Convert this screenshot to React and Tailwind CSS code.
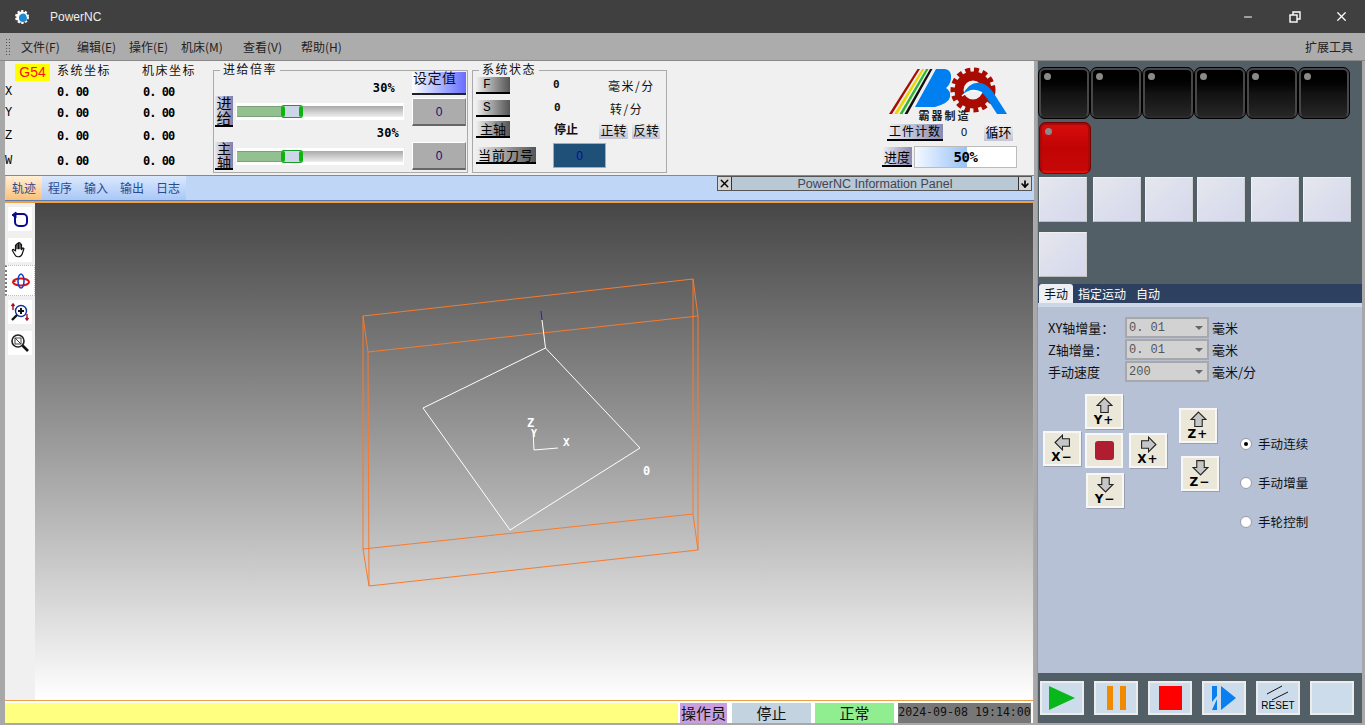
import { ArrowDown, Minus, X } from 'lucide-react'

const cjk = "font-['Noto_Sans_CJK_SC','Liberation_Sans',sans-serif]"
const mono = "font-['DejaVu_Sans_Mono','Liberation_Mono',monospace]"
const serifMono = "font-['Liberation_Mono',monospace]"

const menus = [
  ['文件(F)', 'w-[56px]'],
  ['编辑(E)', 'w-[52px]'],
  ['操作(E)', 'w-[52px]'],
  ['机床(M)', 'w-[62px]'],
  ['查看(V)', 'w-[58px]'],
  ['帮助(H)', 'w-[60px]'],
]

const coords = [
  ['X', 'h-[21px]'],
  ['Y', 'h-[22px]'],
  ['Z', 'h-[24px]'],
  ['W', 'h-[26px]'],
]

function AppGear() {
  return (
    <svg width="16" height="16" viewBox="0 0 16 16">
      <circle cx="8" cy="8" r="5.5" fill="#fff" stroke="#fff" strokeWidth="3" strokeDasharray="2 1.5" />
      <circle cx="8" cy="8" r="5.5" fill="#fff" />
      <path d="M5 9a4 4 0 0 1 7-3l1 3a4 4 0 0 1-8 0z" fill="#1e88d0" />
    </svg>
  )
}

function FadeLabel({ children, className }) {
  return (
    <div className={`flex items-center justify-center bg-gradient-to-r from-[#f0f0f0] to-[#555] border-b-2 border-black text-[13px] leading-none text-black ${className}`}>
      {children}
    </div>
  )
}

function Slider() {
  return (
    <div className="w-[168px] h-[17px] bg-white p-[1px] py-[3px] flex items-center">
      <div className="relative w-full h-[11px] bg-gradient-to-b from-[#aaa] via-[#ccc] to-[#eee]">
        <div className="absolute left-0 top-0 h-full w-[45px] bg-[#92c08e] border-y border-[#7aa276]" />
        <div className="absolute left-[44px] top-[-1px] h-[13px] w-[22px] bg-[#ccd6e6] border-y border-[#1a9a2a] rounded-[3px] flex justify-between">
          <span className="w-[4px] bg-[#0db40d] rounded-[2px]" />
          <span className="w-[4px] bg-[#0db40d] rounded-[2px]" />
        </div>
      </div>
    </div>
  )
}

function ValueBox({ className }) {
  return (
    <div className={`w-[54px] h-[28px] bg-[#acacac] border-t border-l border-white border-b-2 border-r border-b-[#666] border-r-[#888] flex items-center justify-center text-[12px] text-[#10107a] font-['Liberation_Sans',sans-serif] ${className}`}>
      0
    </div>
  )
}

function DarkKey({ red }) {
  return (
    <div className={`relative w-[52px] h-[52px] shrink-0 rounded-[7px] border-[3px] ${red ? 'border-[#a80a0a] border-b-[#e01010] outline outline-1 -outline-offset-1 outline-[#700] bg-gradient-to-b from-[#d80c0c] via-[#c00404] to-[#c80808]' : 'border-[#474747] border-b-[#2c2c2c] outline outline-1 -outline-offset-1 outline-black bg-gradient-to-b from-[#000] via-[#121212] to-[#262626]'}`}>
      <span className="absolute left-[3px] top-[3px] w-[7px] h-[7px] rounded-full bg-[#8a8a8a]" />
    </div>
  )
}

function LightKey({ className }) {
  return <div className={`w-[48px] h-[45px] shrink-0 bg-gradient-to-br from-[#e6e7ee] via-[#dcdfec] to-[#d6d8ec] border border-[#f0f0f0] border-b-[#bcbcbc] border-r-[#d0d0d0] ${className ?? ''}`} />
}

function Arrow({ dir }) {
  const rot = { up: 0, right: 90, down: 180, left: 270 }[dir]
  return (
    <svg width="17" height="17" viewBox="0 0 16 16" style={{ transform: `rotate(${rot}deg)` }}>
      <path d="M8 1 15 8h-3.500v6.500h-7V8H1z" fill="#c6c6c6" stroke="#222" strokeWidth="1" />
    </svg>
  )
}

function JogKey({ dir, label, className }) {
  return (
    <div className={`w-[38px] h-[35px] bg-[#ebe8da] border-2 border-[#f7f7f7] shadow-[1px_1px_0_#9aa0ad] flex flex-col items-center justify-center ${className}`}>
      <Arrow dir={dir} />
      <span className="text-[12px] leading-[12px] font-bold tracking-[1px] text-black font-['DejaVu_Sans',sans-serif]">{label}</span>
    </div>
  )
}

function ComboRow({ label, value, unit }) {
  return (
    <div className="flex items-center h-[21px] mb-[1px]">
      <span className={`w-[77px] text-[13px] leading-none text-[#111] ${cjk}`}>{label}</span>
      <div className="w-[84px] h-[21px] bg-[#d2d2d2] border-2 border-[#a8a8a8] flex items-center justify-between pl-[2px] pr-[4px]">
        <span className={`text-[12px] text-[#555] ${serifMono}`}>{value}</span>
        <span className="w-0 h-0 border-x-[4px] border-x-transparent border-t-[4px] border-t-[#666]" />
      </div>
      <span className={`ml-[3px] text-[13px] text-[#111] ${cjk}`}>{unit}</span>
    </div>
  )
}

function Radio({ label, checked }) {
  return (
    <div className="flex items-center h-[20px] mb-[19px]">
      <span className="w-[12px] h-[12px] rounded-full bg-white border border-[#9a9aa8] flex items-center justify-center">
        {checked && <span className="w-[4px] h-[4px] rounded-full bg-black" />}
      </span>
      <span className={`ml-[6px] text-[12.500px] tracking-[0.1px] text-[#111] ${cjk}`}>{label}</span>
    </div>
  )
}

function RunKey({ children, className }) {
  return (
    <div className={`w-[44px] h-[34px] bg-[#cddcea] border-2 border-[#ececec] flex items-center justify-center ${className ?? ''}`}>
      {children}
    </div>
  )
}

function Logo() {
  return (
    <svg width="122" height="50" viewBox="890 66 122 50">
      <polygon points="919.500,69 922,69 894,114 891,114" fill="#a80c00" />
      <polygon points="924,69 926.500,69 899.500,114 896,114" fill="#e6d800" />
      <polygon points="928,69 930.500,69 904.500,114 901.500,114" fill="#2fb52f" />
      <polygon points="932,69 934.500,69 909.500,114 906.500,114" fill="#111" />
      <path d="M938 69h9q7 1 6 10-1 6-5 9 5 3 4 9-1 6-15 10h-20z" fill="#0080f0" />
      <circle cx="975" cy="90" r="14" fill="none" stroke="#a80c00" strokeWidth="9" />
      <circle cx="975" cy="90" r="20" fill="none" stroke="#a80c00" strokeWidth="5" strokeDasharray="5 3.600" />
      <path d="M964 96q10-9 20-3 4 3 6 7l9 14h10l-14-22q-5-7-12-9-12-2-19 13z" fill="#0080f0" />
      <path d="M964 96q10-9 20-3" fill="none" stroke="#fff" strokeWidth="1.500" />
    </svg>
  )
}

function ToolIcon({ children, active }) {
  return (
    <div className={`w-[30px] h-[31px] flex items-center justify-center ${active ? 'bg-white border border-dotted border-[#bbb] border-l-[#777] border-l-2' : ''}`}>
      <div className="w-[24px] h-[24px] bg-white flex items-center justify-center">{children}</div>
    </div>
  )
}

function Scene() {
  // wireframe is drawn in page coordinates
  return (
    <svg className="absolute inset-0" width="998" height="497" viewBox="35 203 998 497">
      <g fill="none" stroke="#f97a2c" strokeWidth="1">
        <polygon points="363,316 693,279 698,316 368,352" />
        <polygon points="363,549 693,514 698,550 369,586" />
        <path d="M363 316V549M693 279V514M698 316V550M368 352 369 586" />
      </g>
      <g fill="none" stroke="#fff" strokeWidth="1">
        <polygon points="545.500,348 640,448 510,530 423,408" />
        <path d="M545.500 348 542 320" />
        <path d="M533 430 534 450 558 448" />
      </g>
      <path d="M542 320 541 311" stroke="#2222cc" strokeWidth="1" />
    </svg>
  )
}

export default function App() {
  return (
    <div className="w-[1365px] h-[725px] overflow-hidden bg-[#a8a8a8] flex flex-col font-['Noto_Sans_CJK_SC','Liberation_Sans',sans-serif]">
      {/* title bar */}
      <div className="h-[33px] shrink-0 bg-[#404040] flex items-center text-white">
        <div className="ml-[14px] w-[16px]"><AppGear /></div>
        <span className="ml-[20px] text-[12px] font-['Liberation_Sans',sans-serif] text-[#eee]">PowerNC</span>
        <div className="ml-auto flex items-center mr-[16px]">
          <Minus size={12} strokeWidth={2} />
          <svg className="ml-[35px]" width="12" height="12" viewBox="0 0 12 12" fill="none" stroke="#fff" strokeWidth="1.400">
            <rect x="1" y="4" width="7" height="7" />
            <path d="M4 4V1h7v7H8" />
          </svg>
          <X className="ml-[33px]" size={15} strokeWidth={2} />
        </div>
      </div>

      {/* menu bar */}
      <div className="h-[28px] shrink-0 flex items-center bg-[#acacac] pl-[5px] pr-[12px] border-b border-[#888] text-[12px] text-[#222]">
        <div className="w-[5px] h-[18px] bg-[radial-gradient(#555_1px,transparent_1px)] bg-[length:3px_3px]" />
        <div className="flex ml-[11px]">
          {menus.map(([m, w]) => <span key={m} className={w}>{m}</span>)}
        </div>
        <span className="ml-auto">扩展工具</span>
      </div>

      <div className="flex-1 flex pl-[5px] pr-[3px] min-h-0">
        {/* left column */}
        <div className="w-[1029px] shrink-0 flex flex-col">
          {/* top panel */}
          <div className="h-[115px] shrink-0 bg-[#f0f0f0] flex border-b border-[#888]">
            <div className="w-[208px] shrink-0">
              <div className="h-[20px] flex items-start text-[12px] leading-[18px] tracking-[1.500px] text-[#111]">
                <span className="ml-[10px] mt-[3px] w-[35px] h-[17px] bg-[#ffff00] text-[#ff1010] text-[14px] leading-[17px] text-center tracking-normal font-['Liberation_Sans',sans-serif]">G54</span>
                <span className="ml-[7px] w-[85px]">系统坐标</span>
                <span>机床坐标</span>
              </div>
              <div>
                {coords.map(([c, h]) => (
                  <div key={c} className={`flex items-center ${h} ${mono} text-[12px] tracking-[-1px] font-bold text-black`}>
                    <span className={`w-[52px] text-[12px] tracking-normal font-normal ${serifMono}`}>{c}</span>
                    <span className="w-[86px] whitespace-pre">0. 00</span>
                    <span className="whitespace-pre">0. 00</span>
                  </div>
                ))}
              </div>
            </div>

            {/* feed override group */}
            <div className="relative mt-[9px] mb-[2px] w-[255px] shrink-0 border border-[#aaa] flex">
              <span className="absolute left-[6px] top-[-9px] bg-[#f0f0f0] px-[3px] text-[12px] leading-[14px] tracking-[1.500px] text-[#111]">进给倍率</span>
              <div className="w-[198px] pl-[1px] shrink-0 relative">
                <div className="h-[25px] flex items-end justify-end pr-[17px] pb-[1px] text-[12px] font-bold leading-[14px] tracking-[0.2px] font-['DejaVu_Sans_Mono',monospace]">30%</div>
                <div className="flex items-center h-[30px]">
                  <FadeLabel className="w-[18px] h-[31px] text-center !from-[#e8e8f0] !to-[#8080a8] !text-[15px]">进给</FadeLabel>
                  <div className="ml-[3px]"><Slider /></div>
                </div>
                <div className="h-[16px] flex items-end justify-end pr-[13px] pb-[2px] text-[12px] font-bold leading-[14px] tracking-[0.2px] font-['DejaVu_Sans_Mono',monospace]">30%</div>
                <div className="flex items-center h-[28px]">
                  <FadeLabel className="w-[18px] h-[28px] text-center !from-[#e8e8f0] !to-[#8080a8] !text-[14px]">主轴</FadeLabel>
                  <div className="ml-[3px]"><Slider /></div>
                </div>
              </div>
              <div className="flex flex-col">
                <div className="w-[54px] h-[23px] mt-[1px] bg-gradient-to-r from-white to-[#6a6aff] border-b-2 border-[#222] text-[14px] leading-[10px] tracking-[0.500px] text-[#111] pl-[1px]">设定值</div>
                <ValueBox className="mt-[3px]" />
                <ValueBox className="mt-[16px]" />
              </div>
            </div>

            {/* system status group */}
            <div className="relative ml-[4px] mt-[9px] mb-[2px] w-[195px] shrink-0 border border-[#aaa] pl-[3px] text-[#111]">
              <span className="absolute left-[6px] top-[-9px] bg-[#f0f0f0] px-[3px] text-[12px] leading-[14px] tracking-[1.500px]">系统状态</span>
              <div className="flex items-center mt-[6px] h-[17px]">
                <FadeLabel className={`w-[34px] h-[17px] !justify-start pl-[7px] ${serifMono}`}>F</FadeLabel>
                <span className="ml-[43px] w-[20px] text-[11px] font-bold font-['DejaVu_Sans_Mono',monospace]">0</span>
                <span className="ml-[35px] text-[12px] tracking-[1.500px]">毫米/分</span>
              </div>
              <div className="flex items-center mt-[6px] h-[17px]">
                <FadeLabel className={`w-[34px] h-[17px] !justify-start pl-[7px] ${serifMono}`}>S</FadeLabel>
                <span className="ml-[44px] w-[20px] text-[11px] font-bold font-['DejaVu_Sans_Mono',monospace]">0</span>
                <span className="ml-[36px] text-[12px] tracking-[1.500px]">转/分</span>
              </div>
              <div className="flex items-center mt-[3px] h-[18px]">
                <FadeLabel className="w-[34px] h-[17px]">主轴</FadeLabel>
                <span className="ml-[44px] w-[45px] text-[12px] font-bold">停止</span>
                <span className="mt-[2px] w-[29px] h-[18px] bg-gradient-to-b from-[#f4f4f4] to-[#c4c4d4] text-[13px] leading-[17px] text-center">正转</span>
                <span className="mt-[2px] ml-[4px] w-[28px] h-[18px] bg-gradient-to-b from-[#f4f4f4] to-[#c4c4d4] text-[13px] leading-[17px] text-center">反转</span>
              </div>
              <div className="flex items-center mt-[4px]">
                <FadeLabel className="w-[60px] h-[17px] tracking-[1px]">当前刀号</FadeLabel>
                <div className="ml-[17px] mt-[1px] w-[53px] h-[25px] bg-[#1e5078] border border-[#aaa] flex items-center justify-center text-[12px] text-[#0a0aa0] font-['Liberation_Sans',sans-serif]">0</div>
              </div>
            </div>

            {/* logo and counters */}
            <div className="ml-[217px] flex flex-col pt-[5px] w-[135px] shrink-0">
              <div className="ml-[4px]"><Logo /></div>
              <div className="text-center -mt-[6px] ml-[-14px] text-[11px] leading-[11px] font-bold tracking-[2px] text-[#222]">霸器制造</div>
              <div className="flex items-center mt-[2px] ml-[3px] h-[18px]">
                <FadeLabel className="w-[56px] h-[17px] !from-[#f0f0f4] !to-[#8a8ab0] tracking-[1px] !text-[12px]">工件计数</FadeLabel>
                <span className="ml-[18px] w-[23px] text-[11px] font-['Liberation_Sans',sans-serif]">0</span>
                <span className="w-[29px] h-[18px] bg-gradient-to-b from-[#f4f4f4] to-[#c4c4d4] text-[13px] leading-[17px] text-center">循环</span>
              </div>
              <div className="flex items-center mt-[5px] -ml-[2px]">
                <FadeLabel className="w-[30px] h-[20px] !from-[#f0f0f4] !to-[#8a8ab0] !text-[13px]">进度</FadeLabel>
                <div className="relative ml-[2px] w-[103px] h-[22px] border border-[#bbb] bg-white">
                  <div className="w-[52px] h-full bg-gradient-to-r from-[#f4f8ff] to-[#98c2f6]" />
                  <span className="absolute inset-0 flex items-center justify-center text-[14px] font-bold font-['DejaVu_Sans_Mono',monospace] tracking-[-0.5px]">50%</span>
                </div>
              </div>
            </div>
          </div>

          {/* tab strip */}
          <div className="h-[25px] shrink-0 bg-[#c0d6f7] border-b border-[#5a7ab0] flex pl-[1px] text-[12px]">
            <div className="h-[24px] w-[36px] bg-gradient-to-b from-[#fff0d8] to-[#f9bf78] text-center leading-[24px] text-[#2a4a90]">轨迹</div>
            <div className="flex h-[24px] bg-gradient-to-b from-[#dbe8fb] to-[#a8c8f8] text-[#2a4a90]">
              {['程序', '输入', '输出', '日志'].map(t => <span key={t} className="w-[36px] text-center leading-[24px]">{t}</span>)}
            </div>
            <div className="ml-[531px] h-[15px] w-[315px] flex border border-[#555] bg-[#b8c8d4] text-[#445] text-[12.500px] leading-[14px] font-['Liberation_Sans',sans-serif]">
              <div className="w-[14px] bg-[#d4d4d4] border-r border-[#333] flex items-center justify-center"><X size={13} strokeWidth={2.500} color="#000" /></div>
              <div className="flex-1 text-center">PowerNC Information Panel</div>
              <div className="w-[13px] bg-[#d4d4d4] border-l border-[#333] flex items-center justify-center"><ArrowDown size={10} strokeWidth={4} color="#000" /></div>
            </div>
          </div>

          {/* viewport */}
          <div className="h-[499px] shrink-0 flex border-r border-t-2 border-[#f0a040] bg-white">
            <div className="w-[30px] shrink-0 bg-[#f0f0f0] flex flex-col items-center">
              <ToolIcon>
                <svg width="18" height="18" viewBox="0 0 18 18" fill="none" stroke="#0a0a90" strokeWidth="2"><path d="M5 4h7a4 4 0 0 1 4 4v4a4 4 0 0 1-4 4H8a4 4 0 0 1-4-4V6" /><path d="M1 5l4-3v6z" fill="#0a0a90" strokeWidth="1" /></svg>
              </ToolIcon>
              <ToolIcon>
                <svg width="18" height="18" viewBox="0 0 24 24" fill="#fff" stroke="#111" strokeWidth="1.600"><path d="M6 13V6a1 1 0 0 1 2 0v5V4a1 1 0 0 1 2 0v7V3a1 1 0 0 1 2 0v8V5a1 1 0 0 1 2 0v7l1-2a1 1 0 0 1 2 1l-2 6c-1 3-3 4-5 4H9c-2 0-3-1-4-3l-3-5a1 1 0 0 1 2-1z" /></svg>
              </ToolIcon>
              <ToolIcon active>
                <svg width="20" height="20" viewBox="0 0 20 20" fill="none"><ellipse cx="10" cy="11" rx="8" ry="3.500" stroke="#e01010" strokeWidth="2" /><ellipse cx="10" cy="10" rx="3" ry="7" stroke="#1040d0" strokeWidth="1.500" /><path d="M3 8l-1 3 3 0z" fill="#e01010" /></svg>
              </ToolIcon>
              <ToolIcon>
                <svg width="20" height="20" viewBox="0 0 20 20" fill="none"><circle cx="11" cy="9" r="5.500" stroke="#1030a0" strokeWidth="1.400" /><path d="M8 9h6M11 6v6" stroke="#111" strokeWidth="2" /><path d="M7 13 2 18" stroke="#111" strokeWidth="2.400" /><path d="M3 2v6M1.500 4 3 2l1.500 2M17 12v6M15.500 16l1.500 2 1.500-2" stroke="#a01020" strokeWidth="1.400" /></svg>
              </ToolIcon>
              <ToolIcon>
                <svg width="20" height="20" viewBox="0 0 20 20" fill="none"><circle cx="8" cy="8" r="6" stroke="#222" strokeWidth="1.600" /><rect x="5" y="5" width="6" height="6" stroke="#444" /><path d="M5 5l6 6" stroke="#444" /><path d="M12.500 12.500 18 18" stroke="#111" strokeWidth="2.600" /></svg>
              </ToolIcon>
            </div>
            <div className="relative flex-1 bg-gradient-to-b from-[#474747] to-white overflow-hidden">
              <Scene />
              <span className={`absolute left-[492px] top-[214px] text-[12px] leading-none font-bold text-white ${mono}`}>Z</span>
              <span className={`absolute left-[496px] top-[226px] text-[10px] leading-none font-bold text-white ${mono}`}>Y</span>
              <span className={`absolute left-[528px] top-[234px] text-[11px] leading-none font-bold text-white ${mono}`}>X</span>
              <span className={`absolute left-[608px] top-[262px] text-[12px] leading-none font-bold text-white ${mono}`}>0</span>
            </div>
          </div>

          {/* status bar */}
          <div className="h-[23px] shrink-0 pt-[2px] flex bg-white border-r border-t border-[#f0a040] text-[15px] text-[#111] leading-[19px]">
            <div className="w-[673px] bg-[#ffff80]" />
            <div className="ml-[2px] w-[47px] bg-[#c8a0e0] text-center whitespace-nowrap">操作员</div>
            <div className="ml-[5px] w-[79px] bg-[#c3d3e0] text-center">停止</div>
            <div className="ml-[4px] w-[79px] bg-[#90ee90] text-center">正常</div>
            <div className={`ml-[4px] w-[133px] bg-[#777] text-center whitespace-nowrap text-[11.600px] ${mono}`}>2024-09-08 19:14:00</div>
          </div>
        </div>

        {/* right panel */}
        <div className="ml-[3px] mb-[2px] flex-1 flex flex-col bg-[#525f66] border-l border-[#999] min-w-0">
          <div className="flex pt-[6px] h-[59px]">
            {[0, 1, 2, 3, 4, 5].map(i => <DarkKey key={i} />)}
          </div>
          <div className="pl-[1px] h-[52px] pt-[2px]"><DarkKey red /></div>
          <div className="flex pl-[1px] mt-[5px]">
            <LightKey />
            <LightKey className="ml-[6px]" />
            <LightKey className="ml-[4px]" />
            <LightKey className="ml-[4px]" />
            <LightKey className="ml-[6px]" />
            <LightKey className="ml-[4px]" />
          </div>
          <div className="pl-[1px] mt-[10px]"><LightKey /></div>
          <div className="mt-[7px] h-[19px] shrink-0 bg-[#2d4060] flex text-[12px] text-white leading-[19px]">
            <span className="ml-[1px] w-[34px] h-[19px] bg-[#eef0f4] rounded-t-[3px] text-center text-[#111]">手动</span>
            <span className="ml-[5px]">指定运动</span>
            <span className="ml-[10px]">自动</span>
          </div>
          <div className="h-[370px] shrink-0 bg-[#b6c1d6] border-t-4 border-[#cdd6e6] pl-[10px] pt-[10px]">
            <ComboRow label="XY轴增量：" value="0. 01" unit="毫米" />
            <ComboRow label="Z轴增量：" value="0. 01" unit="毫米" />
            <ComboRow label="手动速度" value="200" unit="毫米/分" />
            <div className="flex mt-[12px] -ml-[5px]">
              <JogKey dir="left" label="X−" className="mt-[37px]" />
              <div className="ml-[4px] flex flex-col">
                <JogKey dir="up" label="Y+" />
                <div className="mt-[4px] w-[38px] h-[35px] bg-[#ebe8da] border-2 border-[#f7f7f7] flex items-center justify-center">
                  <span className="w-[19px] h-[19px] rounded-[3px] bg-[#b01c30]" />
                </div>
                <JogKey dir="down" label="Y−" className="mt-[5px] ml-[1px]" />
              </div>
              <JogKey dir="right" label="X+" className="ml-[5px] mt-[39px]" />
              <div className="ml-[12px] flex flex-col pt-[14px]">
                <JogKey dir="up" label="Z+" />
                <JogKey dir="down" label="Z−" className="mt-[13px] ml-[2px]" />
              </div>
              <div className="ml-[21px] pt-[40px]">
                <Radio label="手动连续" checked />
                <Radio label="手动增量" />
                <Radio label="手轮控制" />
              </div>
            </div>
          </div>
          <div className="flex gap-[10px] pl-[2px] pt-[8px]">
            <RunKey><svg width="28" height="26" viewBox="0 0 28 26"><path d="M1 1 27 13 1 25z" fill="#08b81a" /></svg></RunKey>
            <RunKey><div className="flex gap-[7px]"><span className="w-[6px] h-[24px] bg-[#f28a00]" /><span className="w-[6px] h-[24px] bg-[#f28a00]" /></div></RunKey>
            <RunKey><span className="w-[23px] h-[24px] bg-[#ff0000]" /></RunKey>
            <RunKey><svg width="26" height="26" viewBox="0 0 26 26"><path d="M1 1h5v10l-5 6zM6 14v11H1zM10 1l15 12-15 12z" fill="#0a80f0" /></svg></RunKey>
            <RunKey className="flex-col !justify-start pt-[2px]">
              <svg width="24" height="16" viewBox="0 0 24 16" stroke="#111" strokeWidth="1"><path d="M1 9 16 1M6 15 22 7" /></svg>
              <span className="text-[10px] leading-[10px] font-['Liberation_Sans',sans-serif] text-black">RESET</span>
            </RunKey>
            <RunKey />
          </div>
        </div>
      </div>
    </div>
  )
}
